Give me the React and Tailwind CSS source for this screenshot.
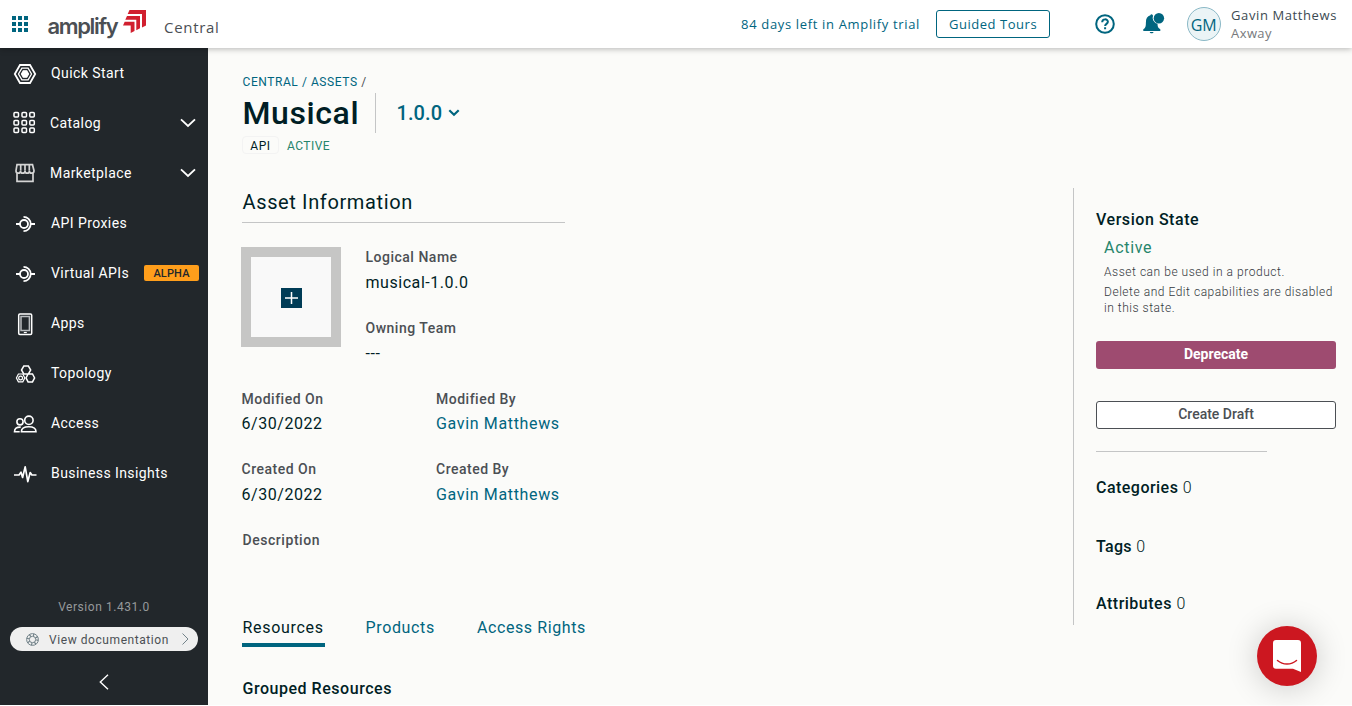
import React from "react";

const stroke = { fill: "none", stroke: "currentColor", strokeLinecap: "butt" };

function Hexagons() {
  return (
    <svg width="24" height="22" viewBox="-0.2 0 24 22" {...stroke} strokeWidth="1.300">
      <path strokeWidth="1.800" d="M6.800 2h10l5.200 9-5.200 9h-10L1.600 11z" />
      <path d="M8.700 5.200h6.200l3.400 5.800-3.400 5.800H8.700L5.300 11z" />
      <path d="M10.100 7.800h3.400l1.800 3.200-1.800 3.200h-3.400L8.300 11z" fill="currentColor" />
    </svg>
  );
}

function CatalogGrid() {
  return (
    <svg width="24" height="22" viewBox="0 0 24 22" {...stroke} strokeWidth="1.500" className="overflow-visible">
      {[1, 9, 16.800].map((x) =>
        [-0.500, 7.400, 14.900].map((y) => <rect key={x + "-" + y} x={x} y={y} width="4.500" height="4.500" rx="1" />)
      )}
    </svg>
  );
}

function Store() {
  return (
    <svg width="24" height="22" viewBox="0 0.8 24 22" {...stroke} strokeWidth="1.700" className="text-[#d4d4d4]">
      <path d="M4 2.500h15.500l1.500 6c0 1.600-1 2.500-2.300 2.500s-2.300-1-2.300-2.300c0 1.300-1 2.300-2.200 2.300S12 10 12 8.700c0 1.300-1 2.300-2.300 2.300S7.500 10 7.500 8.700C7.500 10 6.500 11 5.200 11S3 10 3 8.500zM7.700 2.500v6M12 2.500v6M16.300 2.500v6M4 11v8.200h16V11" />
    </svg>
  );
}

function Proxy() {
  return (
    <svg width="24" height="22" viewBox="-0.5 1 24 22" {...stroke} strokeWidth="1.800">
      <circle cx="10.500" cy="12" r="4" />
      <path d="M2.500 12h4M10 4.800a7.200 7.200 0 0 1 0 14.400M17.300 12h4.200" />
    </svg>
  );
}

function Phone() {
  return (
    <svg width="24" height="24" viewBox="0 0 24 24" {...stroke}>
      <rect x="5.700" y="2" width="13" height="20.500" rx="1.200" strokeWidth="1.500" />
      <rect x="8" y="4.500" width="8.400" height="14" strokeWidth="1.500" className="text-[#b9bcbf]" />
      <path d="M10.800 20.500h3" strokeWidth="1.200" />
    </svg>
  );
}

function Topology() {
  return (
    <svg width="24" height="22" viewBox="-0.4 -0.4 24 22" {...stroke} strokeWidth="1.500">
      <path d="M10.400 2.700h4.600l2.300 3.900-2.300 3.900h-4.600L8.100 6.600zM14.700 10.500h4.400l2.100 4-2.100 4h-4.400l-2.100-4z" />
      <path d="M5 10.600h4.400l2 3.900-2 3.900H5l-2-3.900z" strokeWidth="1.200" />
      <circle cx="7.200" cy="14.600" r="1.900" strokeWidth="1.200" />
    </svg>
  );
}

function People() {
  return (
    <svg width="24" height="22" viewBox="-0.2 -0.5 24 22" {...stroke} strokeWidth="1.600">
      <circle cx="15.700" cy="6.800" r="4.200" />
      <circle cx="6.800" cy="8.300" r="3.100" />
      <path d="M8.200 18.200c0-3.400 2.800-5 7.300-5s7.300 1.600 7.300 5zM6.500 18.200H1.300c0-3.200 2-4.800 6.200-4.600" />
    </svg>
  );
}

function Pulse() {
  return (
    <svg width="24" height="22" viewBox="0 0 24 22" {...stroke} strokeWidth="1.700" strokeLinejoin="round">
      <path d="M1 12h5l2-2.800 1.600 5.300 2.600-10.700 2.600 14.800 2.400-9.100 1.700 2.500H23.500" />
    </svg>
  );
}

function Chevron() {
  return (
    <svg width="16" height="10" viewBox="0 0 16 10" {...stroke} strokeWidth="1.800">
      <path d="M1 1.300l7 6.700 7-6.700" />
    </svg>
  );
}

const nav = [
  ["Quick Start", Hexagons],
  ["Catalog", CatalogGrid, "menu"],
  ["Marketplace", Store, "menu"],
  ["API Proxies", Proxy],
  ["Virtual APIs", Proxy, "alpha"],
  ["Apps", Phone],
  ["Topology", Topology],
  ["Access", People],
  ["Business Insights", Pulse],
];

function Header() {
  return (
    <header className="relative z-10 flex h-12 shrink-0 items-center bg-white pl-[11px] pr-[15px] font-['Open_Sans',sans-serif] shadow-[0_1px_6px_rgba(0,0,0,0.28)]">
      <svg width="18" height="18" viewBox="0 0 18 18" fill="#00657f" className="-mt-px">
        {[1, 7, 13].map((x) => [0, 6, 12].map((y) => <rect key={x + "-" + y} x={x} y={y + 1} width="4" height="4" />))}
      </svg>
      <span className="ml-[18.500px] mt-[3px] w-[69.500px] whitespace-nowrap font-['Inter',sans-serif] text-[22px] leading-7 font-semibold tracking-[-1.350px] text-[#4b4f54]">amplify</span>
      <svg width="24" height="24" viewBox="0 0 24 24" fill="#d1202f" className="-mt-1 ml-[6px]">
        <path d="M6.500 0H23v15.500l-4 2V4H4.700z" />
        <path d="M4 6h13v12.300l-3.700 2V9.700H2.300z" />
        <path d="M1.700 11.700h9.800v9.300L7.700 23v-7.500H0z" />
      </svg>
      <span className="ml-[17px] mt-[6px] text-[15px] leading-6 tracking-[0.7px] text-[#4b4f54]">Central</span>
      <span className="ml-auto text-[13px] leading-5 tracking-[0.66px] text-[#00657f]">84 days left in Amplify trial</span>
      <button className="ml-[16px] flex h-7 w-[114px] items-center justify-center rounded-[3px] border border-[#00657f] pt-0.5 text-[13px] tracking-[0.55px] text-[#00657f]">Guided Tours</button>
      <svg width="20" height="20" viewBox="0 0 20 20" fill="none" stroke="#00657f" strokeWidth="2" className="ml-[45px]">
        <circle cx="10" cy="10" r="8.800" />
        <path d="M7.200 8.200c0-3.800 5.700-3.600 5.700-.4 0 2-2.800 2.200-2.800 4.200M10.100 13.200v2" />
      </svg>
      <svg width="22" height="22" viewBox="0 0 22 22" fill="#00657f" className="-mt-px ml-[28px]">
        <path d="M7.400 2.200c.2-1.300 2-1.300 2.300 0l.4.200a6 6 0 0 0 4.400 8.300c.1 3 .6 4.300 2.800 5.600v1.600H.3v-1.600C2.600 15 2.900 13.200 2.900 9.500c0-4 1.300-6.500 4.500-7.300zM6.700 18.900h3.900c-.3 1.900-3.600 1.900-3.900 0z" />
        <circle cx="15.900" cy="5.300" r="5.200" />
      </svg>
      <span className="ml-[22px] flex size-[34px] items-center justify-center rounded-full border border-[#8ab8c6] bg-[#ebf4f6] pt-0.5 pr-px text-base tracking-[-0.2px] text-[#00657f]">GM</span>
      <div className="ml-[10px] text-[13px] leading-[18px] tracking-[0.6px] text-[#3b4a52]">
        <div>Gavin Matthews</div>
        <div className="tracking-[0.4px] text-[#77797c]">Axway</div>
      </div>
    </header>
  );
}

function Sidebar() {
  return (
    <aside className="flex w-52 shrink-0 flex-col bg-[#22272b] text-white">
      <nav>
        {nav.map(([label, Icon, extra]) => (
          <div key={label} className="flex h-[50px] items-center pl-[13px]">
            <span className="mt-[2px] flex w-6 justify-center"><Icon /></span>
            <span className={extra === "menu" ? "ml-[13px] text-sm tracking-[0.42px]" : "ml-[14px] text-sm tracking-[0.42px]"}>{label}</span>
            {extra === "menu" && <span className="ml-auto mr-[12.500px]"><Chevron /></span>}
            {extra === "alpha" && (
              <span className="ml-auto mr-[9px] flex h-4 w-[55px] items-center justify-center rounded-[2px] bg-[#ff9e1b] pt-0.5 text-[11px] font-medium tracking-[0.15px] text-[#22272b]">ALPHA</span>
            )}
          </div>
        ))}
      </nav>
      <div className="mt-[101px] text-center text-xs leading-4 tracking-[0.55px] text-[#96999b]">Version 1.431.0</div>
      <div className="mx-[10px] mt-[12px] flex h-6 items-center rounded-full bg-[#efefef] pl-4 pr-[9px] text-xs text-[#4b4f54]">
        <svg width="13" height="13" viewBox="0 0 13 13" {...stroke} className="text-[#73838a]">
          <circle cx="6.500" cy="6.500" r="5.900" />
          <circle cx="6.500" cy="6.500" r="3.200" />
          <circle cx="6.500" cy="6.500" r="4.500" strokeWidth="2.600" strokeDasharray="1.200 2.330" />
        </svg>
        <span className="mt-px ml-[10px] tracking-[0.57px]">View documentation</span>
        <svg width="7" height="12" viewBox="0 0 7 12" {...stroke} className="ml-auto text-[#73838a]"><path d="M.5.5L6 6 .5 11.500" /></svg>
      </div>
      <svg width="10" height="16" viewBox="0 0 10 16" {...stroke} strokeWidth="1.400" className="mx-auto mt-[23px]"><path d="M9 .7L1.300 8 9 15.300" /></svg>
    </aside>
  );
}

function Field({ label, value, link, plain }) {
  return (
    <div>
      <div className="text-sm leading-4 font-medium tracking-[0.5px] text-[#4b4f54]">{label}</div>
      <div
        className={
          (plain ? "mt-2 " : "mt-[7px] ") +
          (link
            ? "text-base leading-5 tracking-[0.65px] text-[#00657f]"
            : "text-base leading-5 tracking-[0.55px] text-[#001e25]")
        }
      >
        {value}
      </div>
    </div>
  );
}

function StatePanel() {
  return (
    <aside className="mt-[140px] flex h-[437px] w-[279px] flex-col border-l border-[#c4c5c6] pl-[22px] pr-4 pt-[22px] text-[#001e25]">
      <h3 className="text-base leading-5 font-medium tracking-[0.55px]">Version State</h3>
      <div className="pl-2">
        <div className="mt-2 text-base leading-5 tracking-[0.7px] text-[#26856c]">Active</div>
        <p className="mt-[6px] text-xs leading-4 font-light tracking-[0.54px] text-[#33383d]">Asset can be used in a product.</p>
        <p className="mt-1 text-xs leading-4 font-light tracking-[0.53px] whitespace-nowrap text-[#33383d]">Delete and Edit capabilities are disabled<br />in this state.</p>
      </div>
      <button className="mt-[25px] flex h-7 shrink-0 items-center justify-center rounded-[3px] bg-[#9e4b70] pb-0.5 text-sm font-bold text-white">Deprecate</button>
      <button className="mt-8 flex h-7 shrink-0 items-center justify-center rounded-[3px] border border-[#4b4f54] bg-white pb-0.5 text-sm font-medium text-[#4b4f54]">Create Draft</button>
      <div className="mt-[22px] w-[171px] border-t border-[#c4c5c6]" />
      <h3 className="mt-[26px] text-base leading-5 font-medium tracking-[0.47px]">Categories <span className="font-light">0</span></h3>
      <h3 className="mt-[39px] text-base leading-5 font-medium tracking-[0.3px]">Tags <span className="font-light">0</span></h3>
      <h3 className="mt-[37px] text-base leading-5 font-medium tracking-[0.5px]">Attributes <span className="font-light">0</span></h3>
    </aside>
  );
}

export default function App() {
  return (
    <div className="flex h-[705px] flex-col overflow-hidden bg-[#fbfbf9] font-['Roboto',sans-serif]">
      <Header />
      <div className="flex min-h-0 flex-1">
        <Sidebar />
        <main className="flex min-w-0 flex-1 justify-between">
          <div className="w-[560px] pl-[34px] pt-[26px] text-[#001e25]">
            <div className="pl-[0.500px] text-xs leading-4 tracking-[0.57px] text-[#00657f]">CENTRAL / ASSETS <span className="text-[#4b4f54]">/</span></div>
            <div className="mt-[3px] flex h-10 items-center">
              <h1 className="w-[133px] pl-[0.500px] text-[32px] leading-10 font-medium tracking-[0.6px]">Musical</h1>
              <div className="h-full border-l border-[#c4c5c6]" />
              <span className="ml-[20.500px] text-xl tracking-[0.1px] font-medium text-[#00657f]">1.0.0</span>
              <svg width="12" height="8" viewBox="0 0 12 8" {...stroke} strokeWidth="2.200" className="ml-[6px] text-[#00657f]"><path d="M1.300 1.300L6 5.800l4.700-4.500" /></svg>
            </div>
            <div className="mt-[3px] flex items-center text-xs leading-4">
              <span className="flex h-[18px] w-[37px] items-center justify-center rounded-[4px] border border-[#f3f3f3] pt-0.5 tracking-[0.55px]">API</span>
              <span className="ml-2 pt-0.5 tracking-[0.45px] text-[#26856c]">ACTIVE</span>
            </div>
            <h2 className="mt-[35px] w-[323px] border-b border-[#c4c5c6] pb-[7px] pl-[0.500px] text-xl leading-[26px] tracking-[0.63px]">Asset Information</h2>
            <div className="-ml-px mt-6 flex h-[100px]">
              <div className="flex size-[100px] items-center justify-center border-[10px] border-[#c6c6c5] bg-[#f9f9f9]">
                <svg width="21" height="20" viewBox="0 0 21 20" className="mt-0.5"><path fill="#003c56" d="M0 0h21v20H0z" /><path d="M4 10h13M10.500 4v12" stroke="#fff" strokeWidth="1.500" /></svg>
              </div>
              <div className="ml-[24.500px] flex flex-col gap-[27px] pt-[2px]">
                <Field label="Logical Name" value="musical-1.0.0" plain />
                <Field label="Owning Team" value="---" plain />
              </div>
            </div>
            <div className="-ml-[0.500px] mt-11 grid h-[141px] grid-cols-[194.500px_1fr] grid-rows-[70px_71px]">
              <Field label="Modified On" value="6/30/2022" />
              <Field label="Modified By" value="Gavin Matthews" link />
              <Field label="Created On" value="6/30/2022" plain />
              <Field label="Created By" value="Gavin Matthews" link plain />
            </div>
            <div className="pl-[0.500px] text-sm leading-4 font-medium tracking-[0.55px] text-[#4b4f54]">Description</div>
            <div className="mt-[69px] flex h-[30px] text-base leading-[22px] text-[#00657f]">
              <span className="w-[83px] border-b-4 border-[#00657f] pl-[0.500px] tracking-[0.7px] text-[#001e25]">Resources</span>
              <span className="ml-[40.500px] tracking-[0.65px]">Products</span>
              <span className="ml-[42px] tracking-[0.6px]">Access Rights</span>
            </div>
            <h3 className="mt-[32px] pl-[0.500px] text-base leading-5 font-medium tracking-[0.53px]">Grouped Resources</h3>
          </div>
          <StatePanel />
        </main>
      </div>
      <button className="fixed right-[35px] bottom-5 flex size-[60px] items-center justify-center rounded-full bg-[#cc1720] shadow-[0_2px_32px_rgba(0,0,0,0.2)]">
        <svg width="28" height="32" viewBox="0 0 28 32"><path fill="#fff" d="M3 0h22a3 3 0 0 1 3 3v29l-8-3.200H3a3 3 0 0 1-3-3V3a3 3 0 0 1 3-3z" /><path d="M4.500 20.500c5.500 4.700 13.500 4.700 19 0" fill="none" stroke="#cc1720" strokeWidth="1.500" strokeLinecap="round" /></svg>
      </button>
    </div>
  );
}
